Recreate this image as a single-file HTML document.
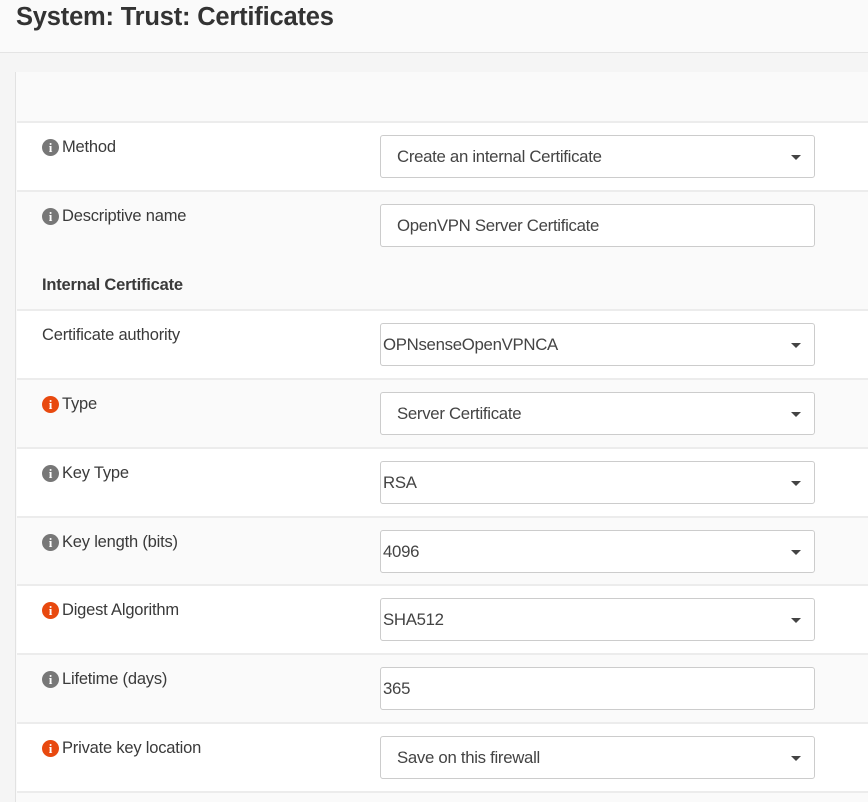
<!DOCTYPE html>
<html><head><meta charset="utf-8"><style>
*{box-sizing:border-box;margin:0;padding:0}
body{width:868px;height:802px;overflow:hidden;background:#f5f5f5;font-family:"Liberation Sans",sans-serif;color:#3a3a3a;position:relative}
.hdr{position:absolute;left:0;top:0;width:868px;height:53px;background:#fafafa;border-bottom:1px solid #e4e4e4}
.hdr h1{position:absolute;left:16px;top:3px;font-size:25.5px;font-weight:bold;letter-spacing:-0.2px;color:#333}
.panel{position:absolute;left:15px;top:72px;width:853px;height:730px;background:#fafafa;border-left:1px solid #e2e2e2}
.row{position:absolute;left:1px;width:852px;border-top:2px solid #ececec}
.w{background:#fff}.g{background:#fafafa}
.lbl{position:absolute;left:25px;top:15px;font-size:16.5px;letter-spacing:-0.2px;display:flex;align-items:center}
.ic{width:17px;height:17px;border-radius:50%;background:#777;color:#fff;font:bold 13px "Liberation Serif",serif;display:inline-flex;align-items:center;justify-content:center;margin-right:3px}
.ic.o{background:#e8490f}
.ctl{position:absolute;left:363px;top:12px;width:435px;height:43px;background:#fff;border:1px solid #ccc;border-radius:3px;font-size:16.8px;letter-spacing:-0.3px;line-height:41px;padding-left:16px;color:#444}
.ctl.s{padding-left:2px}
.car{position:absolute;right:13px;top:19px;width:0;height:0;border-left:5px solid transparent;border-right:5px solid transparent;border-top:5px solid #444}
</style></head><body>
<div class="hdr"><h1>System: Trust: Certificates</h1></div>
<div class="panel">
<div class="row w" style="top:49px;height:69px"><div class="lbl"><span class="ic">i</span>Method</div><div class="ctl">Create an internal Certificate<span class="car"></span></div></div>
<div class="row g" style="top:118px;height:119px"><div class="lbl"><span class="ic">i</span>Descriptive name</div><div class="ctl">OpenVPN Server Certificate</div>
<div class="lbl" style="top:84px;font-weight:bold">Internal Certificate</div></div>
<div class="row w" style="top:237px;height:69px"><div class="lbl">Certificate authority</div><div class="ctl s">OPNsenseOpenVPNCA<span class="car"></span></div></div>
<div class="row g" style="top:306px;height:69px"><div class="lbl"><span class="ic o">i</span>Type</div><div class="ctl">Server Certificate<span class="car"></span></div></div>
<div class="row w" style="top:375px;height:69px"><div class="lbl"><span class="ic">i</span>Key Type</div><div class="ctl s">RSA<span class="car"></span></div></div>
<div class="row g" style="top:444px;height:68px"><div class="lbl"><span class="ic">i</span>Key length (bits)</div><div class="ctl s">4096<span class="car"></span></div></div>
<div class="row w" style="top:512px;height:69px"><div class="lbl"><span class="ic o">i</span>Digest Algorithm</div><div class="ctl s">SHA512<span class="car"></span></div></div>
<div class="row g" style="top:581px;height:69px"><div class="lbl"><span class="ic">i</span>Lifetime (days)</div><div class="ctl s">365</div></div>
<div class="row w" style="top:650px;height:69px"><div class="lbl"><span class="ic o">i</span>Private key location</div><div class="ctl">Save on this firewall<span class="car"></span></div></div>
<div class="row g" style="top:719px;height:11px"></div>
</div>
</body></html>
